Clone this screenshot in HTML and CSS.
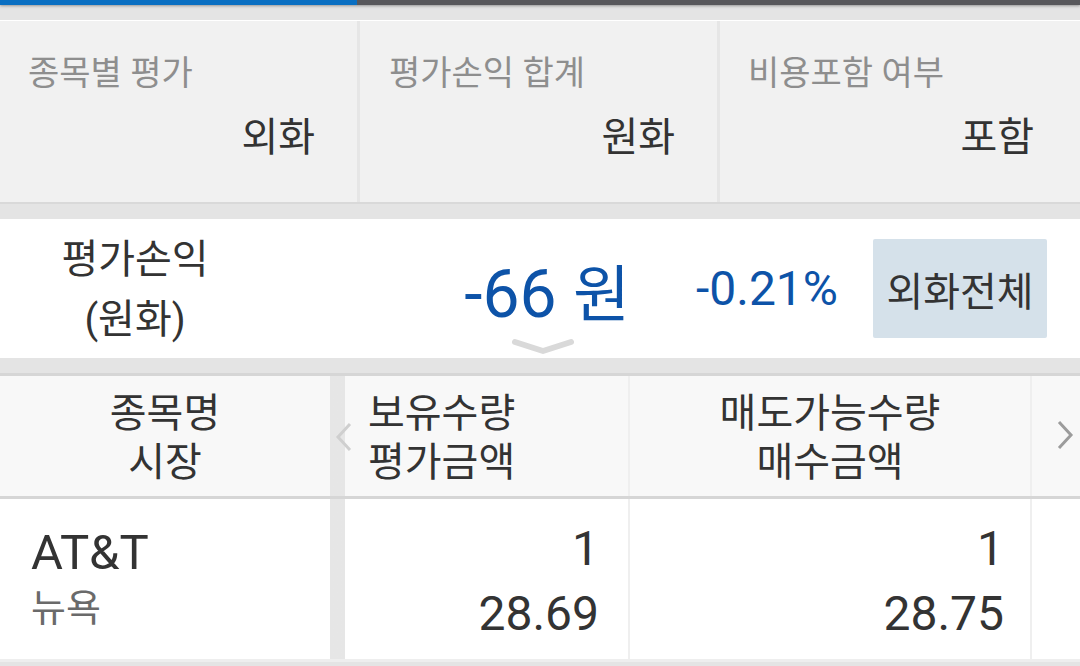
FILE: index.html
```html
<!DOCTYPE html>
<html lang="ko">
<head>
    <meta charset="UTF-8">
    <meta name="viewport" content="width=device-width, initial-scale=1.0">
    <title>잔고 평가</title>
    <link rel="stylesheet" href="styles.css">
</head>
<body>
    <div class="progress"></div>
    <section class="filters">
        <div class="filter">
            <p class="filter-label">종목별 평가</p>
            <p class="filter-value">외화</p>
        </div>
        <div class="filter">
            <p class="filter-label">평가손익 합계</p>
            <p class="filter-value">원화</p>
        </div>
        <div class="filter">
            <p class="filter-label">비용포함 여부</p>
            <p class="filter-value">포함</p>
        </div>
    </section>
    <section class="summary">
        <div class="summary-label">평가손익<br>(원화)</div>
        <div class="summary-amount">-66 <span class="won">원</span></div>
        <div class="summary-rate">-0.21%</div>
        <button class="summary-btn">외화전체</button>
        <svg class="chevron" width="64" height="20" viewBox="0 0 64 20">
            <polyline points="4,5 32,14 60,5" fill="none" stroke="#d9d9d9" stroke-width="6" stroke-linecap="round" stroke-linejoin="round"/>
        </svg>
    </section>
    <section class="table">
        <div class="row head">
            <div class="cell first center">종목명<br>시장</div>
            <div class="cell second">보유수량<br>평가금액</div>
            <div class="cell third center">매도가능수량<br>매수금액</div>
            <div class="cell fourth"></div>
        </div>
        <div class="row body">
            <div class="cell first">
                <span class="name">AT&amp;T</span>
                <span class="market">뉴욕</span>
            </div>
            <div class="cell second right">1<br>28.69</div>
            <div class="cell third right">1<br>28.75</div>
            <div class="cell fourth"></div>
        </div>
        <svg class="arrow arrow-left" width="20" height="30" viewBox="0 0 20 30">
            <polyline points="16,2 4,15 16,28" fill="none" stroke="#cfcfcf" stroke-width="3"/>
        </svg>
        <svg class="arrow arrow-right" width="20" height="30" viewBox="0 0 20 30">
            <polyline points="3,2 15,15 3,28" fill="none" stroke="#9c9c9c" stroke-width="3"/>
        </svg>
    </section>
</body>
</html>
```
FILE: styles.css
```css
*,
*::before,
*::after {
    box-sizing: border-box;
    padding: 0;
    margin: 0;
}

body {
    width: 1080px;
    height: 666px;
    overflow: hidden;
    background-color: #e4e4e4;
    font-family: "Roboto", "Noto Sans CJK KR", sans-serif;
    color: #333;
}

.progress {
    height: 5px;
    background: linear-gradient(to right, #0a6fc2 0, #0a6fc2 357px, #58585c 357px);
    box-shadow: 0 1px 3px rgba(0, 0, 0, 0.35);
}

.filters {
    display: grid;
    grid-template-columns: 357px 360px 1fr;
    margin-top: 15px;
    height: 184px;
    background-color: #f1f1f1;
    border-top: 1px solid #fff;
    border-bottom: 2px solid #d9d9d9;
}
.filter {
    padding: 28px 42px 0 28px;
}
.filter + .filter {
    border-left: 3px solid #e6e6e6;
}
.filter:nth-child(2) {
    padding-left: 29px;
}
.filter:nth-child(3) {
    padding-right: 46px;
}
.filter-label {
    font-size: 34px;
    line-height: 48px;
    color: #8e8e8e;
}
.filter-value {
    margin-top: 16px;
    font-size: 40px;
    line-height: 50px;
    text-align: right;
}

.summary {
    position: relative;
    display: flex;
    align-items: center;
    margin-top: 15px;
    height: 139px;
    padding-right: 33px;
    background-color: #fff;
}
.summary-label {
    width: 270px;
    padding-top: 2px;
    text-align: center;
    font-size: 40px;
    line-height: 60px;
}
.summary-amount {
    margin-left: auto;
    font-size: 66px;
    color: #0d53a8;
    padding-top: 2px;
}
.won {
    font-size: 62px;
}
.summary-rate {
    margin-left: 66px;
    font-size: 48px;
    color: #0d53a8;
}
.summary-btn {
    margin-left: 35px;
    width: 174px;
    height: 99px;
    border: none;
    border-radius: 2px;
    background-color: #d5e1ea;
    color: #333;
    font-family: inherit;
    font-size: 40px;
}
.chevron {
    position: absolute;
    left: 511px;
    bottom: 1px;
}

.table {
    position: relative;
    margin-top: 15px;
    border-top: 3px solid #d6d6d6;
}
.row {
    display: grid;
    grid-template-columns: 330px 298px 404px 1fr;
}
.row.head {
    height: 123px;
    background-color: #f8f8f8;
    border-bottom: 3px solid #d6d6d6;
    font-size: 40px;
    line-height: 49px;
}
.row.body {
    height: 163px;
    background-color: #fff;
    border-bottom: 3px solid #eeeeee;
}
.cell {
    display: flex;
    flex-direction: column;
    justify-content: center;
}
.cell.center {
    align-items: center;
    text-align: center;
}
.cell.second {
    border-style: solid;
    border-width: 0 0 0 15px;
    border-image: linear-gradient(to right, #e6e6e6, rgba(248, 248, 248, 0)) 1;
}
.cell.third {
    border-left: 2px solid #efefef;
    border-right: 2px solid #efefef;
}
.row.head .second {
    padding-left: 23px;
    padding-top: 4px;
}
.row.head .first,
.row.head .third {
    padding-top: 4px;
}
.row.body .second {
    padding-right: 29px;
}
.row.body .third {
    padding-right: 26px;
}
.cell.right {
    text-align: right;
    font-size: 48px;
    line-height: 65px;
    padding-top: 4px;
}
.row.body .first {
    padding-left: 31px;
}
.name {
    font-size: 49px;
    line-height: 58px;
}
.market {
    font-size: 38px;
    line-height: 52px;
    color: #6a6a6a;
}

.arrow {
    position: absolute;
}
.arrow-left {
    left: 334px;
    top: 46px;
}
.arrow-right {
    left: 1056px;
    top: 44px;
}
```
